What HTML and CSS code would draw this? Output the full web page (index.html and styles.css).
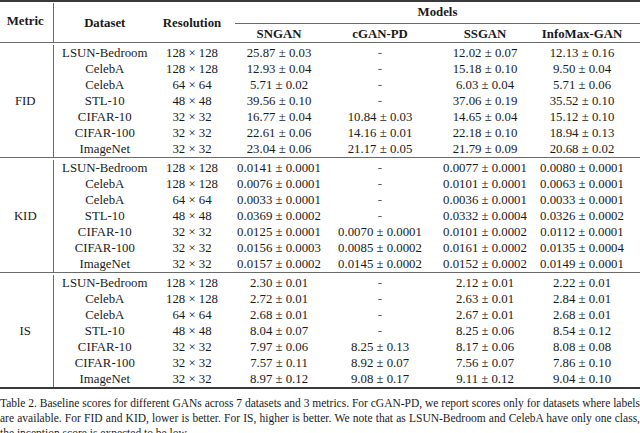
FILE: index.html
```html
<!DOCTYPE html>
<html lang="en">
<head>
<meta charset="utf-8">
<title>Table 2</title>
<link rel="stylesheet" href="styles.css">
</head>
<body>
<figure class="fig">
<table class="results">
<colgroup>
<col class="c-metric"><col class="c-data"><col class="c-res"><col class="c-sn"><col class="c-cg"><col class="c-ss"><col class="c-info">
</colgroup>
<thead>
<tr class="gap"><th class="vl"></th><th colspan="6"></th></tr>
<tr class="h1">
<th class="metric" rowspan="2">Metric</th>
<th rowspan="2">Dataset</th>
<th rowspan="2">Resolution</th>
<th colspan="4" class="models"><div class="cmid">Models</div></th>
</tr>
<tr class="h2">
<th>SNGAN</th><th>cGAN-PD</th><th>SSGAN</th><th class="last">InfoMax-GAN</th>
</tr>
</thead>
<tbody>
<tr class="gap"><td colspan="7"></td></tr>
<tr><td class="metric" rowspan="7">FID</td><td>LSUN-Bedroom</td><td>128 × 128</td><td>25.87 ± 0.03</td><td class="na">-</td><td>12.02 ± 0.07</td><td class="last">12.13 ± 0.16</td></tr>
<tr><td>CelebA</td><td>128 × 128</td><td>12.93 ± 0.04</td><td class="na">-</td><td>15.18 ± 0.10</td><td class="last">9.50 ± 0.04</td></tr>
<tr><td>CelebA</td><td>64 × 64</td><td>5.71 ± 0.02</td><td class="na">-</td><td>6.03 ± 0.04</td><td class="last">5.71 ± 0.06</td></tr>
<tr><td>STL-10</td><td>48 × 48</td><td>39.56 ± 0.10</td><td class="na">-</td><td>37.06 ± 0.19</td><td class="last">35.52 ± 0.10</td></tr>
<tr><td>CIFAR-10</td><td>32 × 32</td><td>16.77 ± 0.04</td><td>10.84 ± 0.03</td><td>14.65 ± 0.04</td><td class="last">15.12 ± 0.10</td></tr>
<tr><td>CIFAR-100</td><td>32 × 32</td><td>22.61 ± 0.06</td><td>14.16 ± 0.01</td><td>22.18 ± 0.10</td><td class="last">18.94 ± 0.13</td></tr>
<tr><td>ImageNet</td><td>32 × 32</td><td>23.04 ± 0.06</td><td>21.17 ± 0.05</td><td>21.79 ± 0.09</td><td class="last">20.68 ± 0.02</td></tr>
</tbody>
<tbody>
<tr class="gap"><td colspan="7"></td></tr>
<tr><td class="metric" rowspan="7">KID</td><td>LSUN-Bedroom</td><td>128 × 128</td><td>0.0141 ± 0.0001</td><td class="na">-</td><td>0.0077 ± 0.0001</td><td class="last">0.0080 ± 0.0001</td></tr>
<tr><td>CelebA</td><td>128 × 128</td><td>0.0076 ± 0.0001</td><td class="na">-</td><td>0.0101 ± 0.0001</td><td class="last">0.0063 ± 0.0001</td></tr>
<tr><td>CelebA</td><td>64 × 64</td><td>0.0033 ± 0.0001</td><td class="na">-</td><td>0.0036 ± 0.0001</td><td class="last">0.0033 ± 0.0001</td></tr>
<tr><td>STL-10</td><td>48 × 48</td><td>0.0369 ± 0.0002</td><td class="na">-</td><td>0.0332 ± 0.0004</td><td class="last">0.0326 ± 0.0002</td></tr>
<tr><td>CIFAR-10</td><td>32 × 32</td><td>0.0125 ± 0.0001</td><td>0.0070 ± 0.0001</td><td>0.0101 ± 0.0002</td><td class="last">0.0112 ± 0.0001</td></tr>
<tr><td>CIFAR-100</td><td>32 × 32</td><td>0.0156 ± 0.0003</td><td>0.0085 ± 0.0002</td><td>0.0161 ± 0.0002</td><td class="last">0.0135 ± 0.0004</td></tr>
<tr><td>ImageNet</td><td>32 × 32</td><td>0.0157 ± 0.0002</td><td>0.0145 ± 0.0002</td><td>0.0152 ± 0.0002</td><td class="last">0.0149 ± 0.0001</td></tr>
</tbody>
<tbody class="final">
<tr class="gap"><td colspan="7"></td></tr>
<tr><td class="metric" rowspan="7">IS</td><td>LSUN-Bedroom</td><td>128 × 128</td><td>2.30 ± 0.01</td><td class="na">-</td><td>2.12 ± 0.01</td><td class="last">2.22 ± 0.01</td></tr>
<tr><td>CelebA</td><td>128 × 128</td><td>2.72 ± 0.01</td><td class="na">-</td><td>2.63 ± 0.01</td><td class="last">2.84 ± 0.01</td></tr>
<tr><td>CelebA</td><td>64 × 64</td><td>2.68 ± 0.01</td><td class="na">-</td><td>2.67 ± 0.01</td><td class="last">2.68 ± 0.01</td></tr>
<tr><td>STL-10</td><td>48 × 48</td><td>8.04 ± 0.07</td><td class="na">-</td><td>8.25 ± 0.06</td><td class="last">8.54 ± 0.12</td></tr>
<tr><td>CIFAR-10</td><td>32 × 32</td><td>7.97 ± 0.06</td><td>8.25 ± 0.13</td><td>8.17 ± 0.06</td><td class="last">8.08 ± 0.08</td></tr>
<tr><td>CIFAR-100</td><td>32 × 32</td><td>7.57 ± 0.11</td><td>8.92 ± 0.07</td><td>7.56 ± 0.07</td><td class="last">7.86 ± 0.10</td></tr>
<tr><td>ImageNet</td><td>32 × 32</td><td>8.97 ± 0.12</td><td>9.08 ± 0.17</td><td>9.11 ± 0.12</td><td class="last">9.04 ± 0.10</td></tr>
</tbody>
</table>
<figcaption class="caption">
<span class="line just">Table 2. Baseline scores for different GANs across 7 datasets and 3 metrics. For cGAN-PD, we report scores only for datasets where labels</span>
<span class="line just">are available. For FID and KID, lower is better. For IS, higher is better. We note that as LSUN-Bedroom and CelebA have only one class,</span>
<span class="line">the inception score is expected to be low.</span>
</figcaption>
</figure>
</body>
</html>
```
FILE: styles.css
```css
html, body {
  margin: 0;
  padding: 0;
  background: #ffffff;
}
body {
  width: 640px;
  height: 433px;
  overflow: hidden;
  font-family: "Liberation Serif", "Times New Roman", serif;
  font-size: 12.8px;
  color: #1a1a1a;
}
.fig {
  margin: 0;
}
.results {
  width: 640px;
  table-layout: fixed;
  border-collapse: collapse;
  border-spacing: 0;
}
.c-metric { width: 53px; }
.c-data { width: 103px; }
.c-res { width: 72px; }
.c-sn { width: 102px; }
.c-cg { width: 100px; }
.c-ss { width: 110px; }
.c-info { width: 100px; }

.results th,
.results td {
  padding: 0;
  text-align: center;
  white-space: nowrap;
  line-height: 16px;
  height: 16px;
  vertical-align: middle;
}
.results thead {
  border-top: 2px solid #3a3a3a;
}
.results th {
  font-weight: bold;
}
.results tr.gap th,
.results tr.gap td {
  height: 1px;
  line-height: 1px;
  font-size: 1px;
}
.results tbody tr.gap td {
  height: 2px;
  line-height: 2px;
}
.results .metric {
  border-right: 1px solid #6a6a6a;
  padding-right: 2px;
}
.results thead th.metric {
  vertical-align: middle;
  padding-bottom: 4px;
}
.results tr.h1 th {
  height: 20px;
}
.results th.models {
  vertical-align: top;
}
.cmid {
  margin-left: 7px;
  padding-top: 1px;
  padding-bottom: 3px;
  border-bottom: 1px solid #6a6a6a;
}
.results tr.h2 th {
  height: 17px;
  padding-top: 1px;
}
.results tbody {
  border-top: 1px solid #6a6a6a;
}
.results tbody.final {
  border-bottom: 2px solid #3a3a3a;
}
.results .last {
  padding-right: 16px;
}
.results td.na {
  color: #555555;
}
.caption {
  margin: 7px 0 0 0;
  font-size: 11.5px;
  line-height: 15px;
  color: #1a1a1a;
}
.caption .line {
  display: block;
  white-space: nowrap;
}
.caption .just {
  text-align: justify;
  text-align-last: justify;
}
```
